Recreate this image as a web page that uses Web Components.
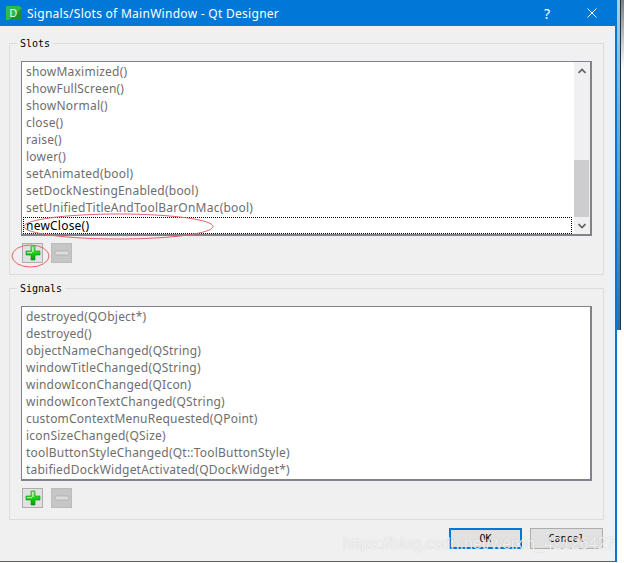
<!DOCTYPE html>
<html>
<head>
<meta charset="utf-8">
<style>
  html, body { margin: 0; height: 100%; background: #fff; overflow: hidden; }
</style>
</head>
<body>
<qt-dialog title="Signals/Slots of MainWindow - Qt Designer">
  <qt-group label="Slots" active>
    <qt-list selected="newClose()" scrollbar items="showMaximized()|showFullScreen()|showNormal()|close()|raise()|lower()|setAnimated(bool)|setDockNestingEnabled(bool)|setUnifiedTitleAndToolBarOnMac(bool)|newClose()"></qt-list>
    <qt-tools></qt-tools>
  </qt-group>
  <qt-group label="Signals">
    <qt-list items="destroyed(QObject*)|destroyed()|objectNameChanged(QString)|windowTitleChanged(QString)|windowIconChanged(QIcon)|windowIconTextChanged(QString)|customContextMenuRequested(QPoint)|iconSizeChanged(QSize)|toolButtonStyleChanged(Qt::ToolButtonStyle)|tabifiedDockWidgetActivated(QDockWidget*)"></qt-list>
    <qt-tools></qt-tools>
  </qt-group>
</qt-dialog>

<script>
const MONO = '"DejaVu Sans Mono", "Liberation Mono", monospace';

const dialogTpl = document.createElement('template');
dialogTpl.innerHTML = `
<style>
  :host {
    display: flex;
    flex-direction: column;
    position: relative;
    width: 624px;
    height: 563px;
    box-sizing: border-box;
    background: #fff;
  }
  .window {
    width: 617px;
    height: 562px;
    box-sizing: border-box;
    display: flex;
    flex-direction: column;
    background: #f0f0f0;
    border-right: 2px solid #0078d7;
    border-bottom: 1px solid #0078d7;
  }
  .title {
    height: 26px;
    flex: none;
    background: #0078d7;
    color: #fff;
    display: flex;
    align-items: center;
    font: 12px "Noto Sans", "Open Sans", sans-serif;
    letter-spacing: .28px;
  }
  .logo { margin: 0 5px 0 6px; flex: none; }
  .text { flex: 1; white-space: nowrap; }
  .help { width: 14px; margin-right: 33px; text-align: center; font-size: 14px; letter-spacing: 0; }
  .close { margin-right: 18px; flex: none; }
  .body {
    flex: 1;
    display: flex;
    flex-direction: column;
    padding: 17px 11px 0 9px;
  }
  .groups { display: flex; flex-direction: column; gap: 13px; }
  .buttons {
    display: flex;
    justify-content: flex-end;
    gap: 8px;
    padding: 8px 1px 0 0;
  }
  /* desktop peeking out behind the window's right edge */
  .edge {
    position: absolute;
    left: 617px;
    top: 0;
    width: 3px;
    height: 330px;
    border-right: 1px solid #26323c;
    background: linear-gradient(#a4d0ee, #5fa8de 45%, #2b6ea6);
  }
  .shade {
    position: absolute;
    left: 621px;
    top: 0;
    width: 3px;
    height: 70px;
    background: linear-gradient(#7d7d7d, #fff);
  }
  .wm {
    position: absolute;
    left: 343px;
    top: 535px;
    font: 16px "Liberation Sans", Arial, sans-serif;
    color: rgba(255,255,255,.78);
    text-shadow: 0 0 1px rgba(130,130,130,.45);
    white-space: nowrap;
    pointer-events: none;
  }
</style>
<div class="window">
  <div class="title">
    <svg class="logo" width="16" height="16" viewBox="0 0 16 16">
      <path d="M0 1h13l3 2v12l-3 0H0z" fill="#2bbb4e"/>
      <path d="M16 3v12H3z" fill="#18913a"/>
      <text x="7.5" y="12" font-family="Liberation Sans, sans-serif" font-size="10.5" text-anchor="middle" fill="#e8ffe8">D</text>
    </svg>
    <span class="text" id="title"></span>
    <span class="help">?</span>
    <svg class="close" width="10" height="10" viewBox="0 0 10 10"><path d="M.5.5l9 9M9.5.5l-9 9" stroke="#fff" stroke-width="1" fill="none"/></svg>
  </div>
  <div class="body">
    <div class="groups"><slot></slot></div>
    <div class="buttons">
      <qt-button default>OK</qt-button>
      <qt-button>Cancel</qt-button>
    </div>
  </div>
</div>
<div class="edge"></div>
<div class="shade"></div>
<div class="wm">https://blog.csdn.net/weixin_42126427</div>
`;

class QtDialog extends HTMLElement {
  constructor() {
    super();
    this.attachShadow({mode: 'open'});
    this.shadowRoot.appendChild(dialogTpl.content.cloneNode(true));
    this.shadowRoot.getElementById('title').textContent = this.getAttribute('title');
  }
}

const groupTpl = document.createElement('template');
groupTpl.innerHTML = `
<style>
  :host {
    display: block;
    position: relative;
    box-sizing: border-box;
    width: 595px;
    height: 232px;
    border: 1px solid #dcdcdc;
    padding: 17px 11px 0 11px;
  }
  .label {
    position: absolute;
    left: 7px;
    top: -8px;
    padding: 0 3px;
    background: #f0f0f0;
    font: 10px/16px ${MONO};
    color: #000;
  }
</style>
<span class="label" id="label"></span>
<slot></slot>
`;

class QtGroup extends HTMLElement {
  constructor() {
    super();
    this.attachShadow({mode: 'open'});
    this.shadowRoot.appendChild(groupTpl.content.cloneNode(true));
    this.shadowRoot.getElementById('label').textContent = this.getAttribute('label');
  }
}

const listTpl = document.createElement('template');
listTpl.innerHTML = `
<style>
  :host {
    display: flex;
    box-sizing: border-box;
    width: 571px;
    height: 175px;
    border: 1px solid #82828c;
    border-width: 1px 2px 2px 1px;
    background: #fff;
    font: 12px "Noto Sans", "Open Sans", sans-serif;
    color: #6e6e6e;
  }
  .rows { flex: 1; min-width: 0; padding: 2px 2px 0 1px; }
  .row {
    height: 17px;
    line-height: 16px;
    padding-left: 3px;
    box-sizing: border-box;
    white-space: nowrap;
    letter-spacing: .22px;
  }
  .row.sel {
    position: relative;
    color: #000;
    outline: 1px dotted #000;
    outline-offset: -1px;
    line-height: 17px;
  }
  .bar {
    width: 16px;
    flex: none;
    background: #f0f0f0;
    display: flex;
    flex-direction: column;
  }
  .arrow { height: 17px; flex: none; display: flex; align-items: center; justify-content: center; }
  .track { flex: 1; display: flex; flex-direction: column; justify-content: flex-end; }
  .thumb { height: 57px; margin-right: 1px; background: #cdcdcd; }
</style>
<div class="rows" id="rows"></div>
`;

class QtList extends HTMLElement {
  constructor() {
    super();
    this.attachShadow({mode: 'open'});
    this.shadowRoot.appendChild(listTpl.content.cloneNode(true));
    const rows = this.shadowRoot.getElementById('rows');
    for (const item of this.getAttribute('items').split('|')) {
      const row = document.createElement('div');
      row.className = 'row';
      if (item === this.getAttribute('selected')) {
        row.classList.add('sel');
        // red hand-drawn ring from the screenshot
        const ring = document.createElement('qt-ring');
        ring.setAttribute('w', '191');
        ring.setAttribute('h', '27');
        ring.style.cssText = 'left:0;top:-4px';
        row.appendChild(ring);
      }
      row.appendChild(document.createTextNode(item));
      rows.appendChild(row);
    }
    if (this.hasAttribute('scrollbar')) {
      const bar = document.createElement('div');
      bar.className = 'bar';
      bar.innerHTML = `
        <div class="arrow"><svg width="8" height="6" viewBox="0 0 8 6"><path d="M.5 5L4 1.5 7.5 5" stroke="#606060" stroke-width="1.6" fill="none"/></svg></div>
        <div class="track"><div class="thumb"></div></div>
        <div class="arrow"><svg width="8" height="6" viewBox="0 0 8 6"><path d="M.5 1L4 4.5 7.5 1" stroke="#606060" stroke-width="1.6" fill="none"/></svg></div>`;
      this.shadowRoot.appendChild(bar);
    }
  }
}

class QtRing extends HTMLElement {
  connectedCallback() {
    if (this.shadowRoot) return;
    this.attachShadow({mode: 'open'});
    const w = +this.getAttribute('w');
    const h = +this.getAttribute('h');
    this.shadowRoot.innerHTML = `
      <style>:host { position: absolute; width: ${w}px; height: ${h}px; pointer-events: none; }
      svg { display: block; }</style>
      <svg width="${w}" height="${h}" viewBox="0 0 ${w} ${h}"><ellipse cx="${w/2}" cy="${h/2}" rx="${w/2-1}" ry="${h/2-1}" fill="none" stroke="#e8606a" stroke-width="1"/></svg>`;
  }
}

const toolsTpl = document.createElement('template');
toolsTpl.innerHTML = `
<style>
  :host { display: flex; gap: 8px; margin: 7px 0 0 1px; }
  .tool {
    position: relative;
    width: 21px;
    height: 20px;
    box-sizing: border-box;
    border: 1px solid #adadad;
    background: #e1e1e1;
    display: flex;
    align-items: center;
    justify-content: center;
  }
  .tool.off { background: #c6c6c6; border-color: #bcbcbc; }
</style>
<div class="tool">
  <svg width="16" height="16" viewBox="0 0 16 16">
    <defs>
      <linearGradient id="g" x1="0" y1="0" x2="0" y2="1"><stop offset="0" stop-color="#7dee6f"/><stop offset=".55" stop-color="#10d010"/><stop offset="1" stop-color="#0a9a10"/></linearGradient>
    </defs>
    <path d="M6 1h4v5h5v4h-5v5H6v-5H1V6h5z" fill="url(#g)" stroke="#0a8f12" stroke-width=".6"/>
    <path d="M7 2h1.6v5H7zM2 7h5v1.2H2z" fill="#c9f8c0" opacity=".8"/>
  </svg>
</div>
<div class="tool off">
  <svg width="16" height="16" viewBox="0 0 16 16">
    <rect x="1" y="6" width="14" height="4" rx="1" fill="#dcdcdc" stroke="#a8a8a8" stroke-width=".7"/>
  </svg>
</div>
`;

class QtTools extends HTMLElement {
  connectedCallback() {
    if (this.shadowRoot) return;
    this.attachShadow({mode: 'open'});
    this.shadowRoot.appendChild(toolsTpl.content.cloneNode(true));
    if (this.parentElement.hasAttribute('active')) {
      const ring = document.createElement('qt-ring');
      ring.setAttribute('w', '39');
      ring.setAttribute('h', '24');
      ring.style.cssText = 'left:-12px;top:0';
      this.shadowRoot.querySelector('.tool').appendChild(ring);
    }
  }
}

const buttonTpl = document.createElement('template');
buttonTpl.innerHTML = `
<style>
  :host {
    display: flex;
    align-items: center;
    justify-content: center;
    box-sizing: border-box;
    width: 73px;
    height: 21px;
    border: 1px solid #adadad;
    background: #e1e1e1;
    font: 10px ${MONO};
    color: #000;
  }
  :host([default]) { border: 2px solid #0078d7; }
</style>
<slot></slot>
`;

class QtButton extends HTMLElement {
  constructor() {
    super();
    this.attachShadow({mode: 'open'});
    this.shadowRoot.appendChild(buttonTpl.content.cloneNode(true));
  }
}

customElements.define('qt-ring', QtRing);
customElements.define('qt-button', QtButton);
customElements.define('qt-list', QtList);
customElements.define('qt-tools', QtTools);
customElements.define('qt-group', QtGroup);
customElements.define('qt-dialog', QtDialog);
</script>
</body>
</html>
